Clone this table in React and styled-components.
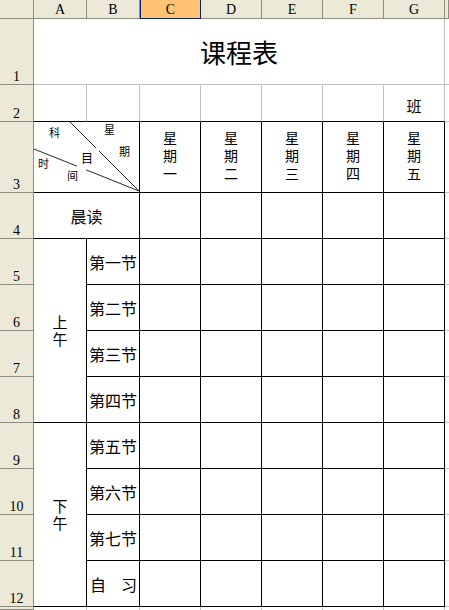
import React from 'react';
import styled, { createGlobalStyle, css } from 'styled-components';

const HEADER_BG = '#ECE9D8';
const HEADER_LINE = '#8E8C7C';
const GRID = '#C0C0C0';
const BLACK = '#000000';
const SEL_BG = '#FFC373';
const SEL_LINE = '#0A246A';

const Global = createGlobalStyle`
  html, body { margin: 0; padding: 0; background: #fff; overflow: hidden; }
  #root { width: 449px; height: 610px; }
`;

const Sheet = styled.div`
  display: grid;
  grid-template-columns: 34px 53px 53px repeat(5, 61px) 1fr;
  grid-template-rows: 19px 66px 37px 71px repeat(9, 46px) 1fr;
  width: 449px;
  height: 610px;
  overflow: hidden;
  background: #fff;
  color: #000;
  font-family: "Noto Sans CJK SC", sans-serif;
`;

const placed = css`
  grid-column: ${p => p.$c} / span ${p => p.$cs || 1};
  grid-row: ${p => p.$r} / span ${p => p.$rs || 1};
  box-sizing: border-box;
  min-width: 0;
  min-height: 0;
`;

const HeadBase = styled.div`
  ${placed};
  display: flex;
  justify-content: center;
  background: ${HEADER_BG};
  font-family: "Liberation Serif", serif;
  font-size: 14px;
  line-height: 14px;
  color: #000;
`;

const Corner = styled(HeadBase)`
  border-right: 1px solid ${HEADER_LINE};
  border-bottom: 1px solid ${HEADER_LINE};
`;

const ColHead = styled(HeadBase)`
  align-items: center;
  padding-top: 2px;
  border-right: 1px solid ${HEADER_LINE};
  border-bottom: 1px solid ${HEADER_LINE};
  ${p => p.$selected && css`
    background: ${SEL_BG};
    border-left: 1px solid ${SEL_LINE};
    border-right-color: ${SEL_LINE};
    border-bottom-color: ${SEL_LINE};
  `}
`;

const RowHead = styled(HeadBase)`
  align-items: flex-end;
  border-right: 1px solid ${HEADER_LINE};
  border-bottom: 1px solid ${HEADER_LINE};
`;

const Cell = styled.div`
  ${placed};
  display: flex;
  align-items: center;
  justify-content: center;
  background: #fff;
  border-right: ${p => (p.$rb ? `1px solid ${p.$rb}` : 'none')};
  border-bottom: ${p => (p.$bb ? `1px solid ${p.$bb}` : 'none')};
  white-space: nowrap;
`;

const TitleCell = styled(Cell)`
  font-size: 26px;
  line-height: 1;
`;

const ClassCell = styled(Cell)`
  align-items: flex-end;
  padding-bottom: 6px;
  font-size: 15px;
  line-height: 18px;
`;

const DiagonalCell = styled(Cell)`
  position: relative;
  display: block;
`;

const DiagLines = styled.svg`
  position: absolute;
  left: 0;
  top: 0;
  stroke: #2a2a2a;
  stroke-width: 1;
`;

const DiagLabel = styled.span`
  position: absolute;
  left: ${p => p.$x}px;
  top: ${p => p.$y}px;
  font-size: ${p => p.$size || 11}px;
  line-height: 1;
`;

const VerticalText = styled.span`
  writing-mode: vertical-rl;
  text-orientation: upright;
  font-size: ${p => p.$size}px;
  line-height: ${p => p.$size + 2}px;
  letter-spacing: ${p => p.$gap}px;
`;

const WeekCell = styled(Cell)`
  align-items: flex-start;
  padding-top: 9px;
`;

const ReadCell = styled(Cell)`
  font-size: 16px;
  line-height: 1;
`;

const HalfDayCell = styled(Cell)`
  padding-top: 2px;
`;

const LessonCell = styled(Cell)`
  font-size: 16px;
  line-height: 1;
`;

const StudyCell = styled(Cell)`
  justify-content: space-between;
  padding: 0 2px 0 3px;
  font-size: 16px;
  line-height: 1;
`;

const LETTERS = ['A', 'B', 'C', 'D', 'E', 'F', 'G'];
const WEEK = ['一', '二', '三', '四', '五'];
const MORNING = ['第一节', '第二节', '第三节', '第四节'];
const AFTERNOON = ['第五节', '第六节', '第七节'];

export default function App() {
  const cells = [];

  // column headers
  cells.push(<Corner key="corner" $c={1} $r={1} />);
  LETTERS.forEach((l, i) => {
    cells.push(
      <ColHead key={`ch${l}`} $c={i + 2} $r={1} $selected={l === 'C'}>
        {l}
      </ColHead>
    );
  });
  cells.push(<ColHead key="chH" $c={9} $r={1} />);

  // row headers
  for (let n = 1; n <= 13; n++) {
    cells.push(
      <RowHead key={`rh${n}`} $c={1} $r={n + 1}>
        {n <= 12 ? n : ''}
      </RowHead>
    );
  }

  // row 1 title
  cells.push(
    <TitleCell key="title" $c={2} $cs={7} $r={2} $rb={GRID} $bb={GRID}>
      课程表
    </TitleCell>
  );

  // row 2
  for (let c = 2; c <= 7; c++) {
    cells.push(<Cell key={`r2c${c}`} $c={c} $r={3} $rb={GRID} $bb={BLACK} />);
  }
  cells.push(
    <ClassCell key="class" $c={8} $r={3} $rb={GRID} $bb={BLACK}>
      班
    </ClassCell>
  );

  // row 3 header
  cells.push(
    <DiagonalCell key="diag" $c={2} $cs={2} $r={4} $rb={BLACK} $bb={BLACK}>
      <DiagLines width="105" height="70" viewBox="0 0 105 70">
        <line x1="36" y1="0" x2="62" y2="26" />
        <line x1="65" y1="29" x2="105" y2="69" />
        <line x1="0" y1="27" x2="43" y2="44.2" />
        <line x1="52" y1="47.8" x2="105" y2="69" />
      </DiagLines>
      <DiagLabel $x={15} $y={5}>科</DiagLabel>
      <DiagLabel $x={70} $y={2}>星</DiagLabel>
      <DiagLabel $x={85} $y={24}>期</DiagLabel>
      <DiagLabel $x={47} $y={30} $size={12}>目</DiagLabel>
      <DiagLabel $x={4} $y={36}>时</DiagLabel>
      <DiagLabel $x={33} $y={48}>间</DiagLabel>
    </DiagonalCell>
  );
  WEEK.forEach((d, i) => {
    cells.push(
      <WeekCell key={`wk${i}`} $c={i + 4} $r={4} $rb={BLACK} $bb={BLACK}>
        <VerticalText $size={14} $gap={4}>{`星期${d}`}</VerticalText>
      </WeekCell>
    );
  });

  // row 4
  cells.push(
    <ReadCell key="read" $c={2} $cs={2} $r={5} $rb={BLACK} $bb={BLACK}>
      晨读
    </ReadCell>
  );

  // morning / afternoon groups
  cells.push(
    <HalfDayCell key="am" $c={2} $r={6} $rs={4} $rb={BLACK} $bb={BLACK}>
      <VerticalText $size={15} $gap={2}>上午</VerticalText>
    </HalfDayCell>
  );
  cells.push(
    <HalfDayCell key="pm" $c={2} $r={10} $rs={4} $rb={BLACK} $bb={BLACK}>
      <VerticalText $size={15} $gap={2}>下午</VerticalText>
    </HalfDayCell>
  );
  MORNING.forEach((t, i) => {
    cells.push(
      <LessonCell key={`am${i}`} $c={3} $r={6 + i} $rb={BLACK} $bb={BLACK}>
        {t}
      </LessonCell>
    );
  });
  AFTERNOON.forEach((t, i) => {
    cells.push(
      <LessonCell key={`pm${i}`} $c={3} $r={10 + i} $rb={BLACK} $bb={BLACK}>
        {t}
      </LessonCell>
    );
  });
  cells.push(
    <StudyCell key="study" $c={3} $r={13} $rb={BLACK} $bb={BLACK}>
      <span>自</span>
      <span>习</span>
    </StudyCell>
  );

  // empty timetable cells rows 4-12
  for (let r = 5; r <= 13; r++) {
    for (let c = 4; c <= 8; c++) {
      cells.push(<Cell key={`e${r}-${c}`} $c={c} $r={r} $rb={BLACK} $bb={BLACK} />);
    }
  }

  // column H filler
  for (let r = 2; r <= 13; r++) {
    cells.push(<Cell key={`h${r}`} $c={9} $r={r} $bb={GRID} />);
  }
  // row 13 filler
  for (let c = 2; c <= 9; c++) {
    cells.push(<Cell key={`r13c${c}`} $c={c} $r={14} $rb={c < 9 ? GRID : undefined} />);
  }

  return (
    <>
      <Global />
      <Sheet>{cells}</Sheet>
    </>
  );
}
